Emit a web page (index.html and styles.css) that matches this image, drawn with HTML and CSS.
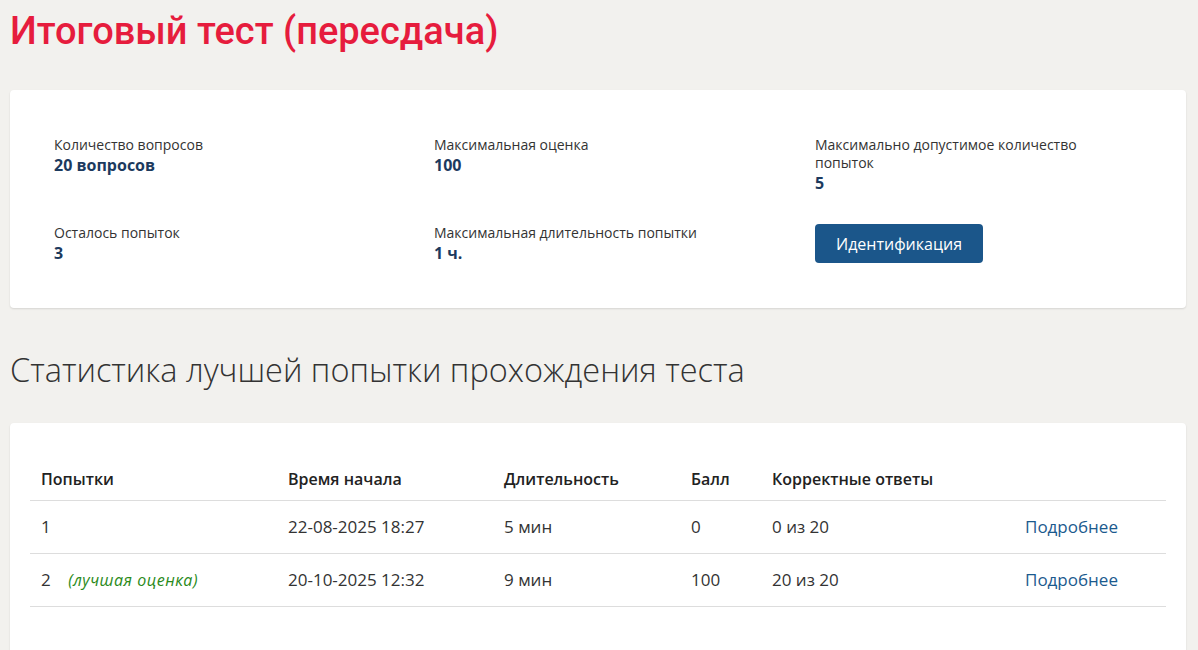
FILE: index.html
```html
<!DOCTYPE html>
<html lang="ru">
<head>
  <meta charset="utf-8">
  <title>Итоговый тест (пересдача)</title>
  <link rel="stylesheet" href="styles.css">
</head>
<body>
  <div class="page">
    <h1 class="page-title">Итоговый тест (пересдача)</h1>

    <div class="card info-card">
      <div class="info-grid">
        <div class="info-item">
          <div class="info-label">Количество вопросов</div>
          <div class="info-value">20 вопросов</div>
        </div>
        <div class="info-item">
          <div class="info-label">Максимальная оценка</div>
          <div class="info-value">100</div>
        </div>
        <div class="info-item narrow">
          <div class="info-label">Максимально допустимое количество попыток</div>
          <div class="info-value">5</div>
        </div>
        <div class="info-item">
          <div class="info-label">Осталось попыток</div>
          <div class="info-value">3</div>
        </div>
        <div class="info-item">
          <div class="info-label">Максимальная длительность попытки</div>
          <div class="info-value">1 ч.</div>
        </div>
        <div class="info-item">
          <button class="btn-primary" type="button">Идентификация</button>
        </div>
      </div>
    </div>

    <h2 class="section-title">Статистика лучшей попытки прохождения теста</h2>

    <div class="card table-card">
      <table class="attempts">
        <colgroup>
          <col class="c-attempt">
          <col class="c-start">
          <col class="c-duration">
          <col class="c-score">
          <col class="c-correct">
          <col>
        </colgroup>
        <thead>
          <tr>
            <th>Попытки</th>
            <th>Время начала</th>
            <th>Длительность</th>
            <th>Балл</th>
            <th>Корректные ответы</th>
            <th></th>
          </tr>
        </thead>
        <tbody>
          <tr>
            <td>1</td>
            <td>22-08-2025 18:27</td>
            <td>5 мин</td>
            <td>0</td>
            <td>0 из 20</td>
            <td><a href="#" class="link">Подробнее</a></td>
          </tr>
          <tr>
            <td>2 <span class="best">(лучшая оценка)</span></td>
            <td>20-10-2025 12:32</td>
            <td>9 мин</td>
            <td>100</td>
            <td>20 из 20</td>
            <td><a href="#" class="link">Подробнее</a></td>
          </tr>
        </tbody>
      </table>
    </div>
  </div>
</body>
</html>
```

FILE: styles.css
```css
body {
  margin: 0;
  background-color: #f2f1ee;
  font-family: "Open Sans", Arial, sans-serif;
  color: #333;
}

.page {
  width: 1176px;
  padding: 0 12px 0 10px;
}

.page-title {
  margin: 8px 0 36px;
  font-family: Roboto, Arial, sans-serif;
  font-size: 38px;
  line-height: 46px;
  font-weight: 500;
  color: #e61c3d;
}

.card {
  background-color: #fff;
  border-radius: 4px;
  box-shadow: 0 1px 2px rgba(0, 0, 0, 0.12);
}

.info-card {
  padding: 46px 0 44px 44px;
}

.info-grid {
  display: grid;
  grid-template-columns: 380px 381px 1fr;
  row-gap: 30px;
}

.info-item.narrow {
  max-width: 290px;
}

.info-label {
  font-size: 14px;
  line-height: 18px;
  color: #333;
}

.info-value {
  font-size: 16px;
  line-height: 22px;
  font-weight: 700;
  color: #1c3a5e;
}

.btn-primary {
  background-color: #1b568a;
  color: #fff;
  border: none;
  border-radius: 4px;
  height: 39px;
  padding: 0 21px;
  font-family: "Open Sans", Arial, sans-serif;
  font-size: 16px;
  cursor: pointer;
}

.section-title {
  margin: 42px 0 33px;
  font-size: 32.5px;
  line-height: 40px;
  font-weight: 300;
  color: #333;
}

.table-card {
  padding: 35px 20px 60px;
}

.attempts {
  width: 100%;
  border-collapse: collapse;
  table-layout: fixed;
}

.c-attempt { width: 247px; }
.c-start { width: 216px; }
.c-duration { width: 187px; }
.c-score { width: 81px; }
.c-correct { width: 253px; }

.attempts th {
  padding: 10px 11px;
  text-align: left;
  font-size: 16px;
  line-height: 22px;
  font-weight: 600;
  color: #222;
  border-bottom: 1px solid #ddd;
}

.attempts td {
  padding: 16px 11px;
  font-size: 17px;
  line-height: 20px;
  color: #333;
  border-bottom: 1px solid #ddd;
}

.best {
  margin-left: 13px;
  font-size: 16px;
  font-style: italic;
  letter-spacing: 0.5px;
  color: #2a8a1a;
}

.link {
  color: #1b5a8e;
  text-decoration: none;
}
```
